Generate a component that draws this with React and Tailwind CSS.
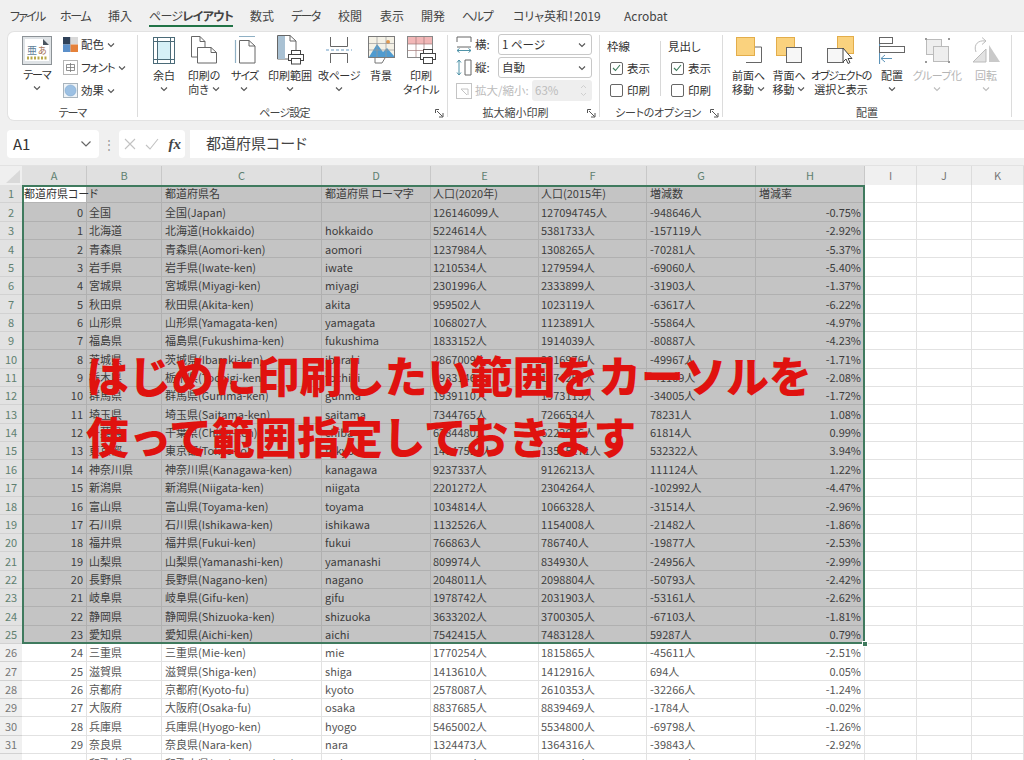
import React from 'react';

const rows = [
  [0, '全国', '全国(Japan)', '', '126146099', '127094745', '-948646', '-0.75'],
  [1, '北海道', '北海道(Hokkaido)', 'hokkaido', '5224614', '5381733', '-157119', '-2.92'],
  [2, '青森県', '青森県(Aomori-ken)', 'aomori', '1237984', '1308265', '-70281', '-5.37'],
  [3, '岩手県', '岩手県(Iwate-ken)', 'iwate', '1210534', '1279594', '-69060', '-5.40'],
  [4, '宮城県', '宮城県(Miyagi-ken)', 'miyagi', '2301996', '2333899', '-31903', '-1.37'],
  [5, '秋田県', '秋田県(Akita-ken)', 'akita', '959502', '1023119', '-63617', '-6.22'],
  [6, '山形県', '山形県(Yamagata-ken)', 'yamagata', '1068027', '1123891', '-55864', '-4.97'],
  [7, '福島県', '福島県(Fukushima-ken)', 'fukushima', '1833152', '1914039', '-80887', '-4.23'],
  [8, '茨城県', '茨城県(Ibaraki-ken)', 'ibaraki', '2867009', '2916976', '-49967', '-1.71'],
  [9, '栃木県', '栃木県(Tochigi-ken)', 'tochigi', '1933146', '1974255', '-41109', '-2.08'],
  [10, '群馬県', '群馬県(Gumma-ken)', 'gunma', '1939110', '1973115', '-34005', '-1.72'],
  [11, '埼玉県', '埼玉県(Saitama-ken)', 'saitama', '7344765', '7266534', '78231', '1.08'],
  [12, '千葉県', '千葉県(Chiba-ken)', 'chiba', '6284480', '6222666', '61814', '0.99'],
  [13, '東京都', '東京都(Tokyo-to)', 'tokyo', '14047594', '13515271', '532322', '3.94'],
  [14, '神奈川県', '神奈川県(Kanagawa-ken)', 'kanagawa', '9237337', '9126213', '111124', '1.22'],
  [15, '新潟県', '新潟県(Niigata-ken)', 'niigata', '2201272', '2304264', '-102992', '-4.47'],
  [16, '富山県', '富山県(Toyama-ken)', 'toyama', '1034814', '1066328', '-31514', '-2.96'],
  [17, '石川県', '石川県(Ishikawa-ken)', 'ishikawa', '1132526', '1154008', '-21482', '-1.86'],
  [18, '福井県', '福井県(Fukui-ken)', 'fukui', '766863', '786740', '-19877', '-2.53'],
  [19, '山梨県', '山梨県(Yamanashi-ken)', 'yamanashi', '809974', '834930', '-24956', '-2.99'],
  [20, '長野県', '長野県(Nagano-ken)', 'nagano', '2048011', '2098804', '-50793', '-2.42'],
  [21, '岐阜県', '岐阜県(Gifu-ken)', 'gifu', '1978742', '2031903', '-53161', '-2.62'],
  [22, '静岡県', '静岡県(Shizuoka-ken)', 'shizuoka', '3633202', '3700305', '-67103', '-1.81'],
  [23, '愛知県', '愛知県(Aichi-ken)', 'aichi', '7542415', '7483128', '59287', '0.79'],
  [24, '三重県', '三重県(Mie-ken)', 'mie', '1770254', '1815865', '-45611', '-2.51'],
  [25, '滋賀県', '滋賀県(Shiga-ken)', 'shiga', '1413610', '1412916', '694', '0.05'],
  [26, '京都府', '京都府(Kyoto-fu)', 'kyoto', '2578087', '2610353', '-32266', '-1.24'],
  [27, '大阪府', '大阪府(Osaka-fu)', 'osaka', '8837685', '8839469', '-1784', '-0.02'],
  [28, '兵庫県', '兵庫県(Hyogo-ken)', 'hyogo', '5465002', '5534800', '-69798', '-1.26'],
  [29, '奈良県', '奈良県(Nara-ken)', 'nara', '1324473', '1364316', '-39843', '-2.92'],
  [30, '和歌山県', '和歌山県(Wakayama-ken)', 'wakayama', '922584', '963579', '-40995', '-4.25'],
];

const COLS = 'grid grid-cols-[22px_65px_75px_160px_109px_108px_108px_109px_109px_52px_55px_52px]';

// label, slot width up to the next tab, letter spacing for the narrow kana
const tabs = [
  ['ファイル', 'w-[50px]', 'tracking-[-1.75px]'],
  ['ホーム', 'w-[48px]', 'tracking-[-1.3px]'],
  ['挿入', 'w-[41px]', ''],
  ['ページレイアウト', 'w-[101px]', 'tracking-[-0.75px]'],
  ['数式', 'w-[41px]', ''],
  ['データ', 'w-[47px]', 'tracking-[-1.6px]'],
  ['校閲', 'w-[42px]', ''],
  ['表示', 'w-[41px]', ''],
  ['開発', 'w-[41px]', ''],
  ['ヘルプ', 'w-[51px]', 'tracking-[-1.3px]'],
  ['コリャ英和！2019', 'w-[111px]', ''],
  ['Acrobat', 'w-[50px]', ''],
];

const Chevron = ({ light }) => (
  <svg width="8" height="6" viewBox="0 0 8 6" className="inline-block shrink-0">
    <path d="M1 1.5 L4 4.5 L7 1.5" fill="none" stroke={light ? '#bdbdbd' : '#555'} strokeWidth="1.1" />
  </svg>
);

const Launcher = () => (
  <svg width="9" height="9" viewBox="0 0 9 9">
    <path d="M0.5 4 V0.5 H4 M2 2 L7.5 7.5 M4 8 H8 V4" fill="none" stroke="#555" strokeWidth="1" />
  </svg>
);

// --- ribbon icons ---
const ThemeIcon = () => (
  <svg width="30" height="29" viewBox="0 0 30 29">
    <rect x="0.5" y="0.5" width="29" height="28" fill="#dfe3e6" stroke="#8c9296" />
    <path d="M3 3 H21 L27 9 V25 H3 Z" fill="#fff" />
    <path d="M21 3 L27 9 H21 Z" fill="#4a5560" />
    <text x="5" y="18" fontSize="10" fill="#5f7f9a" fontFamily="'Noto Sans CJK JP'">亜</text>
    <text x="16" y="18" fontSize="9" fill="#a06a4a" fontFamily="'Noto Sans CJK JP'">あ</text>
    <path d="M5 22 H25" stroke="#b9a94a" strokeWidth="3" strokeDasharray="2 1.5" />
  </svg>
);
const ColorIcon = () => (
  <svg width="15" height="15" viewBox="0 0 15 15">
    <rect width="7.5" height="7.5" fill="#2f4159" />
    <rect x="7.5" width="7.5" height="7.5" fill="#d9d9d9" />
    <rect y="7.5" width="7.5" height="7.5" fill="#5b8fc9" />
    <rect x="7.5" y="7.5" width="7.5" height="7.5" fill="#e5813a" />
  </svg>
);
const FontIcon = () => (
  <svg width="15" height="15" viewBox="0 0 15 15">
    <rect x="0.5" y="0.5" width="14" height="14" fill="#fff" stroke="#b5b5b5" />
    <path d="M3.5 4.5 H11.5 V10.5 H3.5 Z M7.5 3 V12 M3.5 7.5 H11.5" fill="none" stroke="#777" strokeWidth="0.8" />
  </svg>
);
const EffectIcon = () => (
  <svg width="15" height="15" viewBox="0 0 15 15">
    <rect x="0.5" y="0.5" width="14" height="14" fill="#eef3f7" stroke="#a9b4bd" />
    <circle cx="7.5" cy="7.5" r="5.5" fill="#9cc0e3" stroke="#7ea6cc" strokeWidth="0.6" />
  </svg>
);
const MarginIcon = () => (
  <svg width="22" height="27" viewBox="0 0 22 27">
    <rect x="0.5" y="0.5" width="21" height="26" fill="#fff" stroke="#4b6b78" />
    <rect x="4.5" y="4.5" width="13" height="18" fill="#d6f0f7" />
    <path d="M4.5 0.5 V26.5 M17.5 0.5 V26.5 M0.5 4.5 H21.5 M0.5 22.5 H21.5" stroke="#4b6b78" />
  </svg>
);
const OrientIcon = () => (
  <svg width="27" height="28" viewBox="0 0 27 28" fill="#fff" stroke="#666">
    <path d="M0.5 0.5 H9 L14 5.5 V21 H0.5 Z" />
    <path d="M9 0.5 V5.5 H14" fill="none" />
    <path d="M6.5 11.5 H20 L25.5 16.5 V27 H6.5 Z" />
    <path d="M20 11.5 V16.5 H25.5" fill="none" />
  </svg>
);
const SizeIcon = () => (
  <svg width="22" height="28" viewBox="0 0 22 28">
    <path d="M5.5 4.5 H15 L21 10 V27 H5.5 Z" fill="#fff" stroke="#666" />
    <path d="M15 4.5 V10 H21" fill="none" stroke="#666" />
    <path d="M5 0.5 H21 M1.5 4 V27" stroke="#8fb0c4" strokeWidth="1.2" />
  </svg>
);
const PrintAreaIcon = () => (
  <svg width="27" height="30" viewBox="0 0 27 30">
    <path d="M0.5 0.5 H13 L19 6 V24 H0.5 Z" fill="#fff" stroke="#666" />
    <path d="M13 0.5 V6 H19" fill="none" stroke="#666" />
    <rect x="1" y="1" width="7" height="23" fill="#a9c1d3" />
    <rect x="11.5" y="19.5" width="15" height="6" fill="#fff" stroke="#444" />
    <rect x="14.5" y="15.5" width="9" height="4" fill="#fff" stroke="#444" />
    <rect x="14.5" y="23.5" width="9" height="5.5" fill="#fff" stroke="#444" />
  </svg>
);
const BreakIcon = () => (
  <svg width="26" height="26" viewBox="0 0 26 26" fill="none">
    <path d="M4.5 0 V9.5 H21.5 V0 M4.5 26 V16.5 H21.5 V26" stroke="#666" />
    <path d="M0 13 H26" stroke="#6a9cc4" strokeDasharray="3 2" strokeWidth="1.2" />
  </svg>
);
const BackgroundIcon = () => (
  <svg width="27" height="28" viewBox="0 0 27 28">
    <rect x="0.5" y="0.5" width="26" height="21" fill="#f4f1e6" stroke="#7a7a7a" />
    <path d="M1 21 L9 8 L15 16 L19 12 L26 20 V21 Z" fill="#4f9bd0" />
    <circle cx="20" cy="6" r="2" fill="#e39a4e" />
    <path d="M9 1 V21 M18 1 V21 M1 7.5 H26 M1 14 H26" stroke="#9a9a9a" strokeWidth="0.7" />
    <path d="M7 22 V27 H14 L17 22" fill="#fff" stroke="#777" />
  </svg>
);
const PrintTitleIcon = () => (
  <svg width="29" height="28" viewBox="0 0 29 28">
    <rect x="0.5" y="0.5" width="25" height="21" fill="#fff" stroke="#888" />
    <rect x="1" y="1" width="24" height="7" fill="#f2b7b7" />
    <path d="M9 1 V21 M17 1 V21 M1 8 H25 M1 14.5 H25" stroke="#a07878" strokeWidth="0.7" />
    <rect x="13.5" y="17.5" width="15" height="6" fill="#fff" stroke="#444" />
    <rect x="16.5" y="13.5" width="9" height="4" fill="#fff" stroke="#444" />
    <rect x="16.5" y="21.5" width="9" height="6" fill="#fff" stroke="#444" />
  </svg>
);
const FrontIcon = () => (
  <svg width="26" height="26" viewBox="0 0 26 26">
    <path d="M10 10 H25.5 V25.5 H10" fill="#fff" stroke="#666" />
    <rect x="0.5" y="0.5" width="18" height="18" fill="#fad27e" stroke="#e3ad4a" />
  </svg>
);
const BackIcon = () => (
  <svg width="26" height="26" viewBox="0 0 26 26">
    <rect x="0.5" y="0.5" width="18" height="18" fill="#fad27e" stroke="#e3ad4a" />
    <rect x="10.5" y="10.5" width="15" height="15" fill="#f7f7f7" stroke="#666" />
  </svg>
);
const SelectionIcon = () => (
  <svg width="28" height="28" viewBox="0 0 28 28">
    <rect x="10.5" y="0.5" width="16" height="17" fill="#fad27e" stroke="#e3ad4a" />
    <rect x="0.5" y="12.5" width="16" height="14" fill="#f7f7f7" stroke="#666" />
    <path d="M16 12 V26 L19 23 L21 27.5 L23 26.5 L21 22.5 H25 Z" fill="#fff" stroke="#444" />
  </svg>
);
const AlignIcon = () => (
  <svg width="26" height="27" viewBox="0 0 26 27" fill="none">
    <path d="M0.5 0 V27" stroke="#5b93b8" strokeWidth="1.2" />
    <rect x="0.5" y="0.5" width="13" height="6" fill="#fff" stroke="#666" />
    <rect x="0.5" y="9.5" width="25" height="6" fill="#fff" stroke="#666" />
    <path d="M2 21.5 H13 M6 18 L2 21.5 L6 25" stroke="#5b93b8" />
  </svg>
);
const GroupIcon = () => (
  <svg width="27" height="27" viewBox="0 0 27 27">
    <rect x="2.5" y="2.5" width="15" height="15" fill="#eee" stroke="#bbb" />
    <rect x="9.5" y="9.5" width="15" height="15" fill="#eee" stroke="#bbb" />
    <path d="M1 1 h2 v2 h-2 Z M24 1 h2 v2 h-2 Z M1 24 h2 v2 h-2 Z M24 24 h2 v2 h-2 Z" fill="#999" />
  </svg>
);
const RotateIcon = () => (
  <svg width="28" height="26" viewBox="0 0 28 26">
    <path d="M17 8 L28 25 H17 Z" fill="#c9c9c9" />
    <path d="M14 12 L1 25 H14 Z" fill="#e2e2e2" stroke="#bbb" />
    <path d="M4 15 C1 7 7 3 13 4 M10 0.5 L14 4 L10 7.5" fill="none" stroke="#bbb" />
  </svg>
);
const WidthIcon = () => (
  <svg width="16" height="17" viewBox="0 0 16 17" fill="none">
    <path d="M1 6 V1 H15 V6 M1 11 H15" stroke="#666" />
    <path d="M1 14.5 H15 M3.5 12.5 L1 14.5 L3.5 16.5 M12.5 12.5 L15 14.5 L12.5 16.5" stroke="#4f93a8" />
  </svg>
);
const HeightIcon = () => (
  <svg width="16" height="17" viewBox="0 0 16 17" fill="none">
    <path d="M9 1 H15 V16 H9 Z" stroke="#666" />
    <path d="M3 1 V16 M1 3.5 L3 1 L5 3.5 M1 13.5 L3 16 L5 13.5" stroke="#4f93a8" />
  </svg>
);
const ScaleIcon = () => (
  <svg width="16" height="16" viewBox="0 0 16 16" fill="none" stroke="#c4c4c4">
    <rect x="0.5" y="0.5" width="15" height="15" />
    <path d="M5 6 H12 V12 M5 6 L11 12" />
  </svg>
);
const Check = ({ on }) => (
  <span className="flex h-[13px] w-[13px] shrink-0 items-center justify-center rounded-[2px] border border-[#666] bg-white">
    {on && (
      <svg width="9" height="8" viewBox="0 0 9 8">
        <path d="M1 4 L3.5 6.5 L8 1" fill="none" stroke="#3c7a5a" strokeWidth="1.1" />
      </svg>
    )}
  </span>
);

// --- ribbon parts ---
const BigButton = ({ w, icon, lines, chevronLine, disabled }) => (
  <div className={`flex flex-col items-center ${w} ${disabled ? 'text-[#b5b5b5]' : 'text-[#333]'}`}>
    <div className="flex h-[34px] items-center justify-center">{icon}</div>
    <div className="mt-[1px] flex flex-col items-center text-[11px] leading-[14px] whitespace-nowrap">
      <span>{lines[0]}</span>
      {chevronLine ? (
        <span className="flex items-center gap-[3px]">{lines[1]}<Chevron /></span>
      ) : lines[1] ? (
        <span>{lines[1]}</span>
      ) : (
        <span className="flex h-[14px] items-center"><Chevron light={disabled} /></span>
      )}
    </div>
  </div>
);

const Group = ({ w, label, launcher, children, left, labelPad }) => (
  <>
    <div className={`relative flex h-full shrink-0 flex-col ${w}`}>
      <div className={`flex h-[74px] ${left || ''}`}>{children}</div>
      <div className={`flex h-[16px] items-center justify-center text-[11px] text-[#444] ${labelPad || ''}`}>{label}</div>
      {launcher && <div className="absolute right-[3px] bottom-[2px] flex"><Launcher /></div>}
    </div>
    <div className="my-[3px] w-px shrink-0 bg-[#dcdcdc]" />
  </>
);

const SmallItem = ({ icon, label }) => (
  <div className="flex h-[15px] items-center gap-[3px] text-[11.5px] text-[#333]">
    {icon}
    <span>{label}</span>
    <Chevron />
  </div>
);

const SelectRow = ({ icon, label, value }) => (
  <div className="flex h-[21px] items-center">
    <div className="w-[19px]">{icon}</div>
    <span className="w-[23px] text-[11.5px] text-[#333]">{label}</span>
    <div className="flex h-[21px] w-[94px] items-center justify-between rounded-[3px] border border-[#c8c8c8] bg-white pr-[5px] pl-[3px] text-[11.5px] text-[#333]">
      <span>{value}</span>
      <Chevron />
    </div>
  </div>
);

const OptionCol = ({ title, w }) => (
  <div className={`flex flex-col ${w}`}>
    <span className="mt-[6px] text-[11.5px] leading-[16px] text-[#333]">{title}</span>
    <div className="mt-[6px] flex items-center gap-[4px] pl-[3px] text-[11.5px] leading-[16px] text-[#333]"><Check on />表示</div>
    <div className="mt-[6px] flex items-center gap-[4px] pl-[3px] text-[11.5px] leading-[16px] text-[#333]"><Check />印刷</div>
  </div>
);

const Ribbon = () => (
  <div className="ml-[7px] flex h-[90px] rounded-l-[7px] border-y border-l border-[#e2e2e2] bg-white">
    <Group w="w-[129px]" label={<span className="tracking-[-1px]">テーマ</span>}>
      <div className="flex w-[55px] flex-col items-center pt-[4px] pl-[3px] text-[#333]">
        <ThemeIcon />
        <span className="mt-[2px] text-[11px] leading-[14px] tracking-[-1px]">テーマ</span>
        <span className="flex h-[13px] items-center"><Chevron /></span>
      </div>
      <div className="flex flex-col gap-[8px] pt-[5px]">
        <SmallItem icon={<ColorIcon />} label="配色" />
        <SmallItem icon={<FontIcon />} label={<span className="tracking-[-1px]">フォント</span>} />
        <SmallItem icon={<EffectIcon />} label="効果" />
      </div>
    </Group>
    <Group w="w-[309px]" label={<span className="tracking-[-0.8px]">ページ設定</span>} labelPad="pr-[16px]" launcher left="pl-[6px] pt-[1px]">
      <BigButton w="w-[40px]" icon={<MarginIcon />} lines={['余白']} />
      <BigButton w="w-[40px]" icon={<OrientIcon />} lines={['印刷の', '向き']} chevronLine />
      <BigButton w="w-[41px]" icon={<SizeIcon />} lines={[<span className="tracking-[-1px]">サイズ</span>]} />
      <BigButton w="w-[50px]" icon={<PrintAreaIcon />} lines={['印刷範囲']} />
      <BigButton w="w-[48px]" icon={<BreakIcon />} lines={[<span className="tracking-[-0.4px]">改ページ</span>]} />
      <BigButton w="w-[36px]" icon={<BackgroundIcon />} lines={['背景', ' ']} />
      <BigButton w="w-[44px]" icon={<PrintTitleIcon />} lines={['印刷', <span className="tracking-[-0.5px]">タイトル</span>]} />
    </Group>
    <Group w="w-[151px]" label="拡大縮小印刷" labelPad="pr-[16px]" launcher>
      <div className="flex flex-col gap-[2px] pt-[2px] pl-[8px]">
        <SelectRow icon={<WidthIcon />} label="横:" value="1 ページ" />
        <SelectRow icon={<HeightIcon />} label="縦:" value="自動" />
        <div className="flex h-[21px] items-center text-[11.5px] text-[#bcbcbc]">
          <div className="w-[19px]"><ScaleIcon /></div>
          <span className="w-[57px]">拡大/縮小:</span>
          <div className="flex h-[21px] w-[60px] items-center justify-between rounded-[3px] bg-[#eeeeee] pr-[5px] pl-[3px]">
            <span>63%</span>
            <svg width="7" height="13" viewBox="0 0 7 13" fill="none" stroke="#cfcfcf">
              <path d="M1 4 L3.5 1.5 L6 4 M1 9 L3.5 11.5 L6 9" />
            </svg>
          </div>
        </div>
      </div>
    </Group>
    <Group w="w-[122px]" label={<span className="tracking-[-0.3px]">シートのオプション</span>} labelPad="pr-[6px]" launcher left="pl-[7px]">
      <OptionCol title="枠線" w="w-[53px]" />
      <div className="mt-[9px] h-[55px] w-px bg-[#d8d8d8]" />
      <div className="w-[7px]" />
      <OptionCol title="見出し" w="w-[52px]" />
    </Group>
    <Group w="w-[288px]" label="配置" left="pl-[5px] pt-[1px]">
      <BigButton w="w-[41px]" icon={<FrontIcon />} lines={['前面へ', '移動']} chevronLine />
      <BigButton w="w-[40px]" icon={<BackIcon />} lines={['背面へ', '移動']} chevronLine />
      <BigButton w="w-[64px]" icon={<SelectionIcon />} lines={[<span className="tracking-[-1.2px]">オブジェクトの</span>, '選択と表示']} />
      <BigButton w="w-[38px]" icon={<AlignIcon />} lines={['配置']} />
      <BigButton w="w-[52px]" icon={<GroupIcon />} lines={[<span className="tracking-[-0.6px]">グループ化</span>]} disabled />
      <BigButton w="w-[46px]" icon={<RotateIcon />} lines={['回転']} disabled />
    </Group>
  </div>
);

const FormulaBar = () => (
  <div className="mt-[9px] flex h-[28px] items-stretch">
    <div className="ml-[7px] flex w-[92px] items-center justify-between rounded-[4px] bg-white pr-[7px] pl-[6px] text-[15px] text-[#333]">
      <span>A1</span>
      <svg width="12" height="8" viewBox="0 0 12 8"><path d="M1.5 1.5 L6 6 L10.5 1.5" fill="none" stroke="#666" strokeWidth="1.2" /></svg>
    </div>
    <div className="flex w-[20px] items-center justify-center text-[12px] leading-none text-[#999]">⋮</div>
    <div className="flex w-[66px] items-center justify-between rounded-[4px] bg-white pr-[4px] pl-[5px]">
      <svg width="12" height="12" viewBox="0 0 12 12"><path d="M1 1 L11 11 M11 1 L1 11" stroke="#c2c2c2" strokeWidth="1.1" /></svg>
      <svg width="14" height="12" viewBox="0 0 14 12"><path d="M1 7 L5 11 L13 1" fill="none" stroke="#c2c2c2" strokeWidth="1.1" /></svg>
      <span className="font-['Liberation_Serif'] text-[15px] font-bold text-[#444] italic">fx</span>
    </div>
    <div className="ml-[5px] flex flex-1 items-center bg-white pb-[2px] pl-[16px] text-[15px] text-[#444]">都道府県コード</div>
  </div>
);

const ColumnHeader = () => (
  <div className={`${COLS} h-[19px] text-[11px]`}>
    <div className="bg-[#efefef]">
      <svg width="22" height="19" viewBox="0 0 22 19" className="block"><path d="M6 17 L20 4 V17 Z" fill="#d9d9d9" /></svg>
    </div>
    {['A', 'B', 'C', 'D', 'E', 'F', 'G', 'H'].map(c => (
      <div key={c} className="flex items-center justify-center border-r border-[#c8c8c8] bg-[#e0e0e0] text-[#5f8070]">{c}</div>
    ))}
    {['I', 'J', 'K'].map(c => (
      <div key={c} className="flex items-center justify-center border-r border-[#dcdcdc] bg-[#f0f0f0] text-[#777]">{c}</div>
    ))}
  </div>
);

const Cell = ({ children, selected, right, pad, white }) => {
  const tone = white
    ? 'relative bg-white border-[#b4b4b4] text-[#333]'
    : selected
      ? 'bg-[#c4c4c4] border-[#b0b0b0] text-[#3c3c3c]'
      : 'bg-white border-[#e2e2e2] text-[#555]';
  return (
    <div className={`flex h-full items-center whitespace-nowrap border-r border-b ${tone} ${right ? 'justify-end pr-[3px]' : pad || 'pl-[2px]'}`}>
      {children}
    </div>
  );
};

const RowNumber = ({ n, selected }) => (
  <div className={`flex h-full items-center justify-center border-b border-[#d2d2d2] text-[11px] ${selected ? 'bg-[#e2e2e2] text-[#5f8070]' : 'bg-[#f0f0f0] text-[#777]'}`}>
    {n}
  </div>
);

const Sheet = () => (
  <div className="relative flex-1 overflow-hidden text-[11px]">
    <div className={`${COLS} h-[18.36px]`}>
      <RowNumber n={1} selected />
      <Cell selected white>都道府県コード</Cell>
      <Cell selected />
      <Cell selected pad="pl-[3px]">都道府県名</Cell>
      <Cell selected pad="pl-[3px]">都道府県 ローマ字</Cell>
      <Cell selected>人口(2020年)</Cell>
      <Cell selected>人口(2015年)</Cell>
      <Cell selected pad="pl-[3px]">増減数</Cell>
      <Cell selected pad="pl-[3px]">増減率</Cell>
      <Cell /><Cell /><Cell />
    </div>
    {rows.map((r, i) => {
      const sel = i < 24;
      return (
        <div key={r[0]} className={`${COLS} h-[18.36px]`}>
          <RowNumber n={i + 2} selected={sel} />
          <Cell selected={sel} right>{r[0]}</Cell>
          <Cell selected={sel}>{r[1]}</Cell>
          <Cell selected={sel} pad="pl-[3px]">{r[2]}</Cell>
          <Cell selected={sel} pad="pl-[3px]">{r[3]}</Cell>
          <Cell selected={sel}>{r[4]}人</Cell>
          <Cell selected={sel}>{r[5]}人</Cell>
          <Cell selected={sel} pad="pl-[3px]">{r[6]}人</Cell>
          <Cell selected={sel} right>{r[7]}%</Cell>
          <Cell /><Cell /><Cell />
        </div>
      );
    })}

    {/* selection outline + fill handle */}
    <div className="absolute top-0 left-[22px] h-[459px] w-[843px] border-2 border-[#3f7a5e]" />
    <div className="absolute top-[456px] left-[862px] h-[6px] w-[6px] border border-white bg-[#3f7a5e]" />

    {/* red annotation over the sheet */}
    <div className="absolute top-[159px] left-[86px] whitespace-nowrap text-[42.7px] leading-[61px] font-black text-[#e0120f] [font-feature-settings:normal]">
      <div>はじめに印刷したい範囲をカーソルを</div>
      <div>使って範囲指定しておきます</div>
    </div>
  </div>
);

export default function App() {
  return (
    <div className="flex h-[760px] w-[1024px] flex-col overflow-hidden bg-[#f0f0f0] font-['Noto_Sans_CJK_JP','Noto_Sans',sans-serif] [font-feature-settings:'palt']">
      <div className="flex h-[31px] items-start pt-[6px] pl-[10px] text-[12px] leading-[20px] text-[#444]">
        {tabs.map(([t, w, track]) => (
          <div key={t} className={`shrink-0 whitespace-nowrap ${w} ${track}`}>
            {t === 'ページレイアウト' ? (
              <span className="inline-block h-[21px] border-b-2 border-[#217346]">
                ページ<span className="font-bold">レイアウト</span>
              </span>
            ) : t}
          </div>
        ))}
      </div>
      <Ribbon />
      <FormulaBar />
      <div className="mt-[7px] h-px bg-[#e2e2e2]" />
      <ColumnHeader />
      <Sheet />
    </div>
  );
}
